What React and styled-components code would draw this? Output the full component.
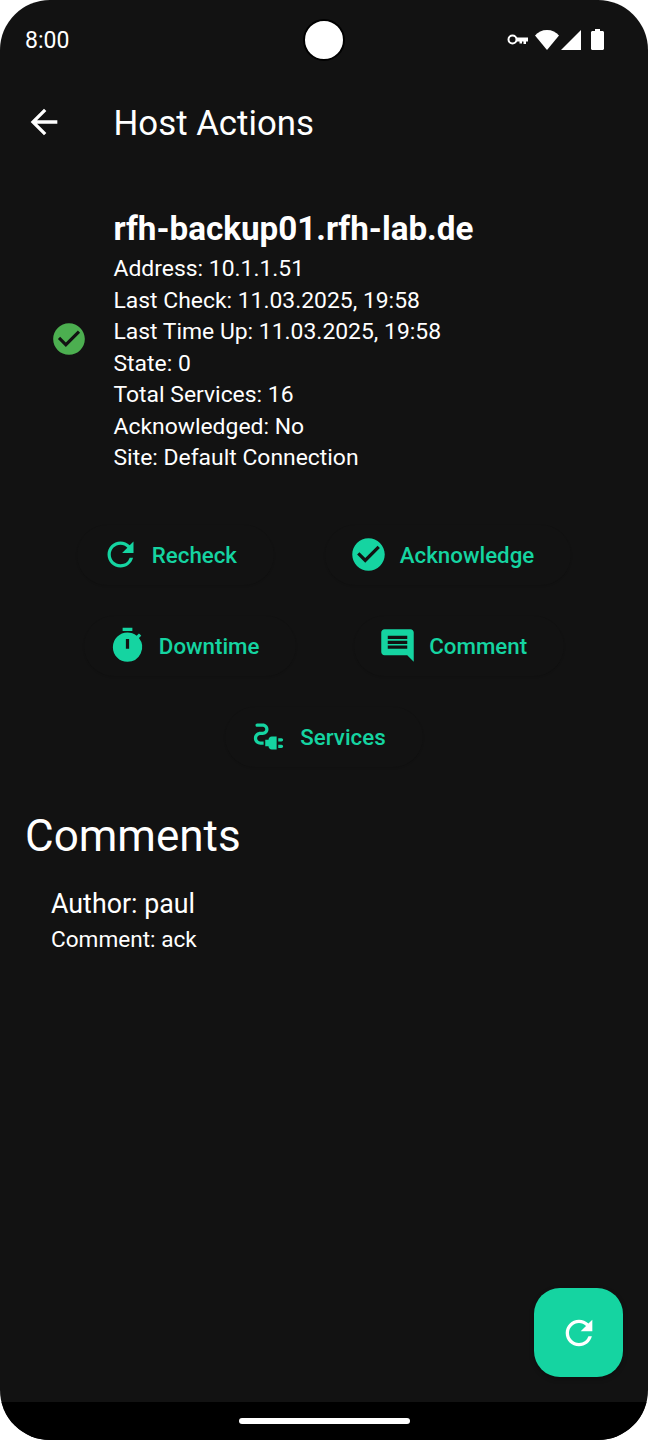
import React from 'react'
import styled, { createGlobalStyle } from 'styled-components'
import {
  MdArrowBack,
  MdRefresh,
  MdCheckCircle,
  MdTimer,
  MdComment,
  MdElectricalServices,
} from 'react-icons/md'

const accent = '#15d4a1'

const GlobalStyle = createGlobalStyle`
  html, body {
    margin: 0;
    padding: 0;
    background: #fff;
  }
  body {
    font-family: Roboto, "Liberation Sans", sans-serif;
  }
`

const Phone = styled.div`
  position: relative;
  width: 648px;
  height: 1440px;
  display: flex;
  flex-direction: column;
  background: #121212;
  color: #fff;
  border-radius: 50px;
  overflow: hidden;
`

const StatusBar = styled.div`
  height: 80px;
  flex: none;
  display: flex;
  align-items: center;
  justify-content: space-between;
  padding: 0 44px 0 25px;
  box-sizing: border-box;
`

const Clock = styled.span`
  font-size: 23px;
  line-height: 28px;
  margin-top: 1px;
`

const Camera = styled.div`
  position: absolute;
  top: 19px;
  left: 303px;
  width: 38px;
  height: 38px;
  border-radius: 50%;
  background: #fff;
  border: 2px solid #000;
`

const StatusIcons = styled.div`
  display: flex;
  align-items: center;
  gap: 2px;
  margin-top: -1px;
`

const KeySvg = styled.svg`
  margin-right: 5px;
`

const BatterySvg = styled.svg`
  margin-left: 8px;
`

const AppBar = styled.div`
  height: 84px;
  flex: none;
  display: flex;
  align-items: center;
  padding-left: 24px;
`

const BackIcon = styled(MdArrowBack)`
  flex: none;
`

const ScreenTitle = styled.h1`
  margin: 2px 0 0 49.500px;
  font-size: 34.8px;
  font-weight: 400;
  line-height: 40px;
`

const HostRow = styled.section`
  display: flex;
  align-items: center;
  margin-top: 45px;
  padding-left: 50px;
`

const HostIcon = styled(MdCheckCircle)`
  flex: none;
  margin: -5px 25.500px 0 0;
  color: #4caf50;
`

const HostName = styled.h2`
  margin: 0 0 4px;
  font-size: 33.2px;
  font-weight: 700;
  line-height: 40px;
`

const HostLine = styled.div`
  font-size: 22.9px;
  line-height: 31.5px;
`

const Actions = styled.div`
  display: flex;
  flex-direction: column;
  gap: 31px;
  margin-top: 51px;
  padding: 0 26px;
`

const ActionRow = styled.div`
  display: flex;
  justify-content: space-evenly;
`

const ActionButton = styled.button`
  height: 60px;
  display: flex;
  align-items: center;
  gap: 12px;
  padding: 0 37px 0 24px;
  border: 0;
  border-radius: 30px;
  background: #121212;
  box-shadow: 0 1px 2px rgba(0, 0, 0, 0.12);
  color: ${accent};
  font-family: inherit;
  font-size: 22.3px;
  font-weight: 500;
`

const CommentsTitle = styled.h2`
  margin: 42px 0 0 25px;
  font-size: 44px;
  font-weight: 400;
  line-height: 54px;
`

const CommentItem = styled.div`
  margin-top: 23px;
  padding-left: 51px;
`

const CommentAuthor = styled.div`
  font-size: 26.8px;
  line-height: 36px;
`

const CommentBody = styled.div`
  font-size: 22.6px;
  line-height: 36px;
`

const Fab = styled.button`
  position: absolute;
  right: 25px;
  bottom: 63px;
  width: 89px;
  height: 89px;
  display: flex;
  align-items: center;
  justify-content: center;
  padding: 0;
  border: 0;
  border-radius: 26px;
  background: ${accent};
  color: #fff;
  box-shadow: 0 2px 5px rgba(0, 0, 0, 0.3);
`

const NavBar = styled.div`
  margin-top: auto;
  height: 38px;
  flex: none;
  display: flex;
  align-items: center;
  justify-content: center;
  background: #000;
`

const HomeIndicator = styled.div`
  width: 171px;
  height: 6px;
  border-radius: 3px;
  background: #fff;
`

function KeyIcon() {
  return (
    <KeySvg width="21" height="11" viewBox="0 0 21 11">
      <circle cx="5.5" cy="5.5" r="4" fill="none" stroke="#fff" strokeWidth="2" />
      <path d="M9 3.5h12v4h-2v2.500h-2.500V7.500H15v2h-2.500v-2H9z" fill="#fff" />
    </KeySvg>
  )
}

function WifiIcon() {
  return (
    <svg width="24" height="20" viewBox="0 0 24 20">
      <path d="M0 5.500C3 2 7 0 12 0s9 2 12 5.500L12 20z" fill="#fff" />
    </svg>
  )
}

function SignalIcon() {
  return (
    <svg width="20" height="20" viewBox="0 0 20 20">
      <path d="M20 0v20H0z" fill="#fff" />
    </svg>
  )
}

function BatteryIcon() {
  return (
    <BatterySvg width="13" height="21" viewBox="0 0 13 21">
      <path
        d="M4 0h5v2h2.500c.8 0 1.500.7 1.500 1.500v16c0 .8-.7 1.500-1.500 1.500h-10C.7 21 0 20.300 0 19.500v-16C0 2.700.7 2 1.500 2H4z"
        fill="#fff"
      />
    </BatterySvg>
  )
}

function Action({ icon: Icon, children }) {
  return (
    <ActionButton>
      <Icon size={39} />
      {children}
    </ActionButton>
  )
}

export default function App() {
  return (
    <>
      <GlobalStyle />
      <Phone>
        <StatusBar>
          <Clock>8:00</Clock>
          <StatusIcons>
            <KeyIcon />
            <WifiIcon />
            <SignalIcon />
            <BatteryIcon />
          </StatusIcons>
        </StatusBar>
        <Camera />

        <AppBar>
          <BackIcon size={40} />
          <ScreenTitle>Host Actions</ScreenTitle>
        </AppBar>

        <HostRow>
          <HostIcon size={38} />
          <div>
            <HostName>rfh-backup01.rfh-lab.de</HostName>
            <HostLine>Address: 10.1.1.51</HostLine>
            <HostLine>Last Check: 11.03.2025, 19:58</HostLine>
            <HostLine>Last Time Up: 11.03.2025, 19:58</HostLine>
            <HostLine>State: 0</HostLine>
            <HostLine>Total Services: 16</HostLine>
            <HostLine>Acknowledged: No</HostLine>
            <HostLine>Site: Default Connection</HostLine>
          </div>
        </HostRow>

        <Actions>
          <ActionRow>
            <Action icon={MdRefresh}>Recheck</Action>
            <Action icon={MdCheckCircle}>Acknowledge</Action>
          </ActionRow>
          <ActionRow>
            <Action icon={MdTimer}>Downtime</Action>
            <Action icon={MdComment}>Comment</Action>
          </ActionRow>
          <ActionRow>
            <Action icon={MdElectricalServices}>Services</Action>
          </ActionRow>
        </Actions>

        <CommentsTitle>Comments</CommentsTitle>
        <CommentItem>
          <CommentAuthor>Author: paul</CommentAuthor>
          <CommentBody>Comment: ack</CommentBody>
        </CommentItem>

        <Fab>
          <MdRefresh size={40} />
        </Fab>

        <NavBar>
          <HomeIndicator />
        </NavBar>
      </Phone>
    </>
  )
}
